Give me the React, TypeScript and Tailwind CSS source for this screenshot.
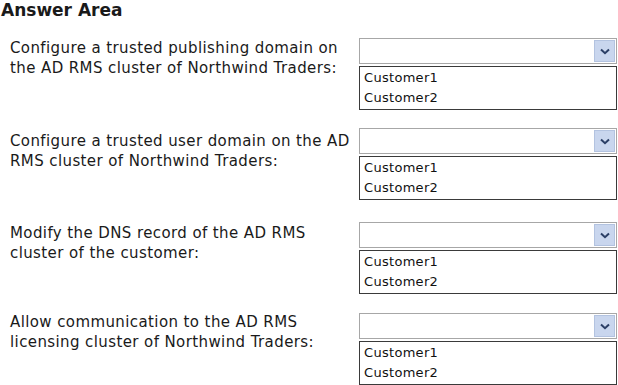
const rows = [
  {
    label: ["Configure a trusted publishing domain on", "the AD RMS cluster of Northwind Traders:"],
    mt: "mt-[18px]",
    lift: "mt-0",
  },
  {
    label: ["Configure a trusted user domain on the AD", "RMS cluster of Northwind Traders:"],
    mt: "mt-[18px]",
    lift: "mt-[3px]",
  },
  {
    label: ["Modify the DNS record of the AD RMS", "cluster of the customer:"],
    mt: "mt-[22px]",
    lift: "mt-[1px]",
  },
  {
    label: ["Allow communication to the AD RMS", "licensing cluster of Northwind Traders:"],
    mt: "mt-[19px]",
    lift: "-mt-[1px]",
  },
];

function Chevron() {
  return (
    <svg width="10" height="7" viewBox="0 0 10 7">
      <path d="M1 1.5 L5 5.2 L9 1.5" fill="none" stroke="#2b3f66" strokeWidth="2" />
    </svg>
  );
}

function Picker() {
  return (
    <div className="w-[258px] flex flex-col">
      <div className="h-[26px] flex border border-[#a7a7a7] bg-white">
        <div className="flex-1" />
        <div className="w-[21px] m-[1px] flex items-center justify-center bg-[#c9d6ee] border border-[#b3c3e0]">
          <Chevron />
        </div>
      </div>
      <div className="mt-[2px] h-[44px] border border-[#3a3a3a] px-[4px] pt-[1px] text-[13px] tracking-[0.3px] leading-[20px] text-[#111]">
        <div>Customer1</div>
        <div>Customer2</div>
      </div>
    </div>
  );
}

export default function App() {
  return (
    <div
      className="w-[618px] h-[385px] bg-white overflow-hidden text-[#1a1a1a]"
      style={{ fontFamily: "Tahoma, 'DejaVu Sans', Verdana, sans-serif" }}
    >
      <div className="pl-[1px] text-[17px] font-bold leading-[20px]">Answer Area</div>
      {rows.map((r, i) => (
        <div key={i} className={`flex ${r.mt}`}>
          <div className={`w-[359px] pl-[10px] text-[15px] tracking-[0.4px] leading-[20px] ${r.lift}`}>
            <div>{r.label[0]}</div>
            <div>{r.label[1]}</div>
          </div>
          <Picker />
        </div>
      ))}
    </div>
  );
}
